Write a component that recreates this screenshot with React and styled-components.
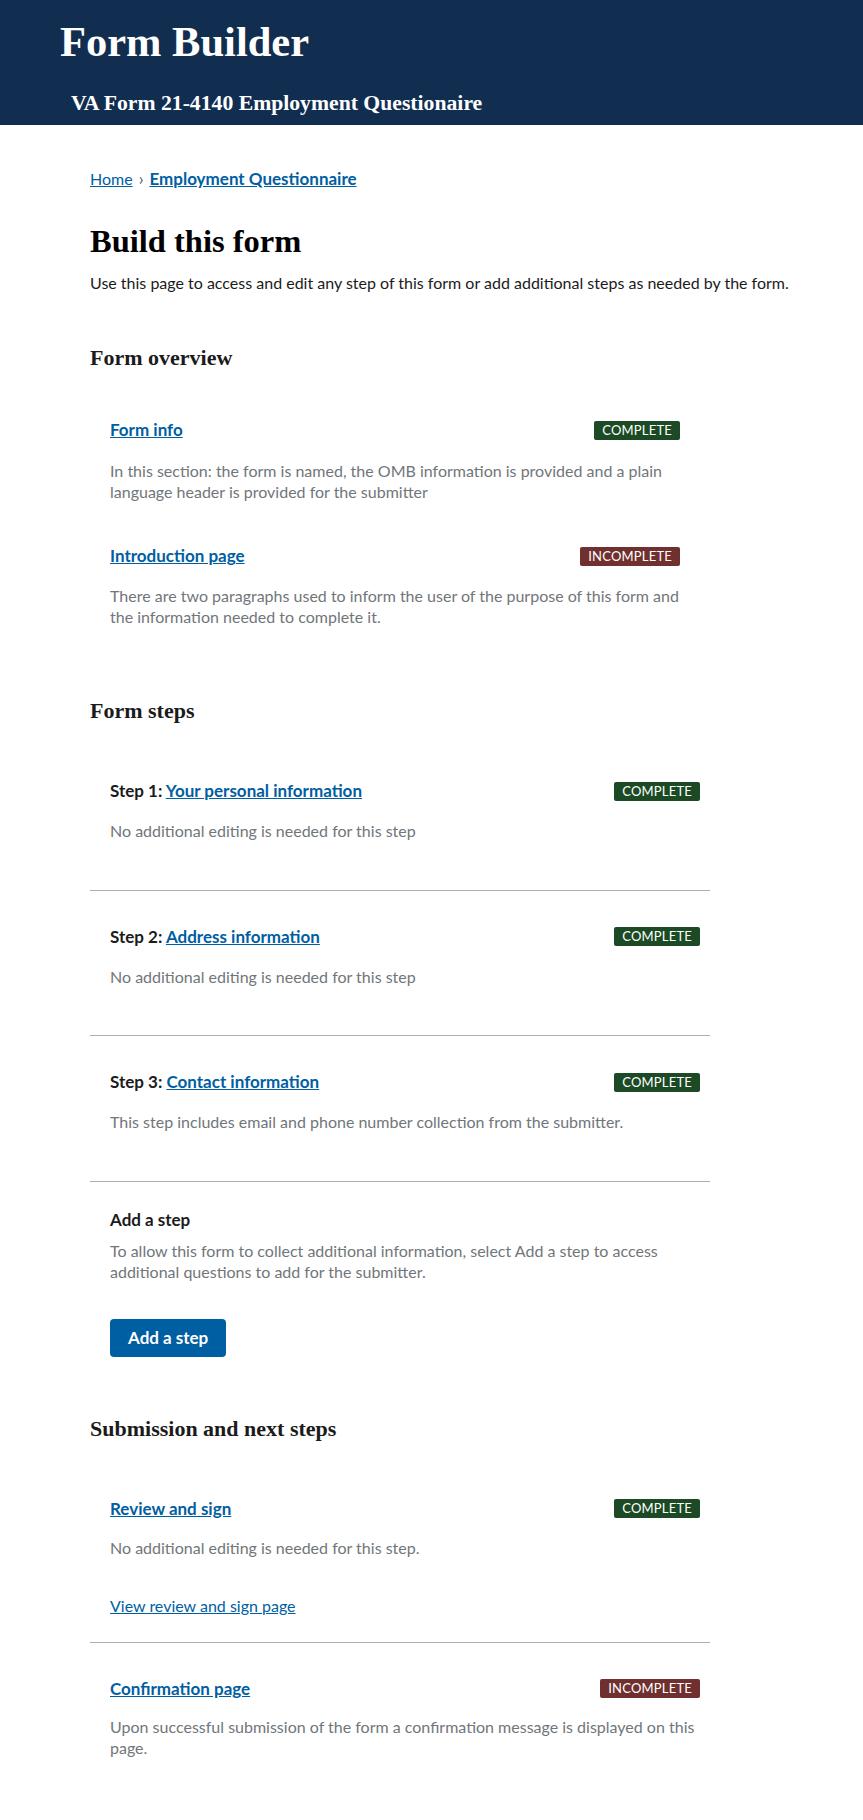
import React from "react";
import styled, { createGlobalStyle } from "styled-components";

const GlobalStyle = createGlobalStyle`
  html, body { margin: 0; padding: 0; background: #ffffff; }
  body { font-family: "Lato", "Liberation Sans", sans-serif; color: #1b1b1b; }
  * { box-sizing: border-box; }
`;

const serif = `"Liberation Serif", "DejaVu Serif", serif`;
const sans = `"Lato", "Liberation Sans", sans-serif`;

const Banner = styled.header`
  background: #112e51;
  height: 125px;
  padding: 17px 0 0 60px;
  display: flex;
  flex-direction: column;
`;

const BannerTitle = styled.div`
  font-family: ${serif};
  font-weight: 700;
  font-size: 42.5px;
  line-height: 50px;
  color: #ffffff;
`;

const BannerSubtitle = styled.div`
  margin: 22px 0 0 11px;
  font-family: ${serif};
  font-weight: 700;
  font-size: 21.7px;
  line-height: 28px;
  color: #ffffff;
`;

const Main = styled.main`
  padding: 42px 0 62px 90px;
  display: flex;
  flex-direction: column;
`;

const Breadcrumb = styled.nav`
  display: flex;
  align-items: center;
  gap: 6px;
  font-family: ${sans};
  font-size: 16px;
  line-height: 24px;
`;

const CrumbLink = styled.a`
  color: #005ea2;
  text-decoration: underline;
  font-weight: ${(p) => (p.$current ? 700 : 400)};
  font-size: ${(p) => (p.$current ? 17 : 16)}px;
`;

const CrumbSep = styled.span`
  color: #565c65;
  font-size: 17px;
`;

const PageTitle = styled.h1`
  margin: 28px 0 0;
  font-family: ${serif};
  font-weight: 700;
  font-size: 32.5px;
  line-height: 44px;
  color: #000000;
`;

const Intro = styled.p`
  margin: 8px 0 0;
  font-family: ${sans};
  font-size: 16px;
  line-height: 24px;
  color: #1b1b1b;
`;

const SectionHeading = styled.h2`
  margin: ${(p) => p.$gap}px 0 0;
  font-family: ${serif};
  font-weight: 700;
  font-size: 22px;
  line-height: 30px;
  color: #1b1b1b;
`;

const List = styled.div`
  margin-top: ${(p) => p.$gap}px;
  width: ${(p) => p.$width}px;
  display: flex;
  flex-direction: column;
`;

const OverviewItem = styled.div`
  padding: 0 20px;
  & + & {
    margin-top: 42px;
  }
`;

const StepItem = styled.div`
  padding: 34px 10px 48.6px 20px;
  border-bottom: 1px solid #a9aeb1;
  &:first-child {
    padding-top: 0;
  }
`;

const ReviewItem = styled.div`
  padding: 0 10px 25px 20px;
  border-bottom: 1px solid #a9aeb1;
`;

const FinalItem = styled.div`
  padding: 34px 10px 0 20px;
`;

const ItemHeader = styled.div`
  display: flex;
  align-items: center;
  justify-content: space-between;
  height: 24px;
`;

const ItemTitle = styled.div`
  font-family: ${sans};
  font-weight: 700;
  font-size: 17px;
  line-height: 24px;
  color: #1b1b1b;
`;

const TitleLink = styled.a`
  color: #005ea2;
  text-decoration: underline;
  font-weight: 700;
`;

const Badge = styled.span`
  display: inline-block;
  height: 19px;
  padding: 0 8px;
  border-radius: 2px;
  font-family: ${sans};
  font-size: 13px;
  line-height: 19px;
  letter-spacing: 0.2px;
  text-transform: uppercase;
  color: #ffffff;
  background: ${(p) => (p.$complete ? "#1b4a25" : "#6f302f")};
`;

const Description = styled.p`
  margin: ${(p) => (p.$gap != null ? p.$gap : 17)}px 0 0;
  font-family: ${sans};
  font-size: 16px;
  line-height: 21px;
  color: #71767a;
`;

const PlainLink = styled.a`
  display: block;
  margin-top: 37px;
  font-family: ${sans};
  font-size: 16px;
  line-height: 22px;
  color: #005ea2;
  text-decoration: underline;
`;

const AddStepBlock = styled.div`
  padding: 26px 20px 0;
  display: flex;
  flex-direction: column;
  align-items: flex-start;
`;

const AddStepLabel = styled.div`
  font-family: ${sans};
  font-weight: 700;
  font-size: 17px;
  line-height: 24px;
  color: #1b1b1b;
`;

const PrimaryButton = styled.button`
  margin-top: 37px;
  height: 38px;
  padding: 0 18px;
  border: none;
  border-radius: 4px;
  background: #005ea2;
  color: #ffffff;
  font-family: ${sans};
  font-weight: 700;
  font-size: 17px;
  cursor: pointer;
`;

const StatusBadge = ({ complete }) => (
  <Badge $complete={complete}>{complete ? "Complete" : "Incomplete"}</Badge>
);

const steps = [
  { n: 1, title: "Your personal information", desc: "No additional editing is needed for this step" },
  { n: 2, title: "Address information", desc: "No additional editing is needed for this step" },
  {
    n: 3,
    title: "Contact information",
    desc: "This step includes email and phone number collection from the submitter.",
  },
];

export default function App() {
  return (
    <>
      <GlobalStyle />
      <Banner>
        <BannerTitle>Form Builder</BannerTitle>
        <BannerSubtitle>VA Form 21-4140 Employment Questionaire</BannerSubtitle>
      </Banner>
      <Main>
        <Breadcrumb>
          <CrumbLink href="#">Home</CrumbLink>
          <CrumbSep>›</CrumbSep>
          <CrumbLink href="#" $current>
            Employment Questionnaire
          </CrumbLink>
        </Breadcrumb>
        <PageTitle>Build this form</PageTitle>
        <Intro>
          Use this page to access and edit any step of this form or add additional steps as needed by the form.
        </Intro>

        <SectionHeading $gap={48}>Form overview</SectionHeading>
        <List $gap={45} $width={610}>
          <OverviewItem>
            <ItemHeader>
              <ItemTitle>
                <TitleLink href="#">Form info</TitleLink>
              </ItemTitle>
              <StatusBadge complete />
            </ItemHeader>
            <Description $gap={18}>
              In this section: the form is named, the OMB information is provided and a plain language header is
              provided for the submitter
            </Description>
          </OverviewItem>
          <OverviewItem>
            <ItemHeader>
              <ItemTitle>
                <TitleLink href="#">Introduction page</TitleLink>
              </ItemTitle>
              <StatusBadge />
            </ItemHeader>
            <Description $gap={17}>
              There are two paragraphs used to inform the user of the purpose of this form and the information needed
              to complete it.
            </Description>
          </OverviewItem>
        </List>

        <SectionHeading $gap={69}>Form steps</SectionHeading>
        <List $gap={53} $width={620}>
          {steps.map((s) => (
            <StepItem key={s.n}>
              <ItemHeader>
                <ItemTitle>
                  Step {s.n}: <TitleLink href="#">{s.title}</TitleLink>
                </ItemTitle>
                <StatusBadge complete />
              </ItemHeader>
              <Description>{s.desc}</Description>
            </StepItem>
          ))}
          <AddStepBlock>
            <AddStepLabel>Add a step</AddStepLabel>
            <Description $gap={8}>
              To allow this form to collect additional information, select Add a step to access additional questions
              to add for the submitter.
            </Description>
            <PrimaryButton type="button">Add a step</PrimaryButton>
          </AddStepBlock>
        </List>

        <SectionHeading $gap={57}>Submission and next steps</SectionHeading>
        <List $gap={53} $width={620}>
          <ReviewItem>
            <ItemHeader>
              <ItemTitle>
                <TitleLink href="#">Review and sign</TitleLink>
              </ItemTitle>
              <StatusBadge complete />
            </ItemHeader>
            <Description $gap={16}>No additional editing is needed for this step.</Description>
            <PlainLink href="#">View review and sign page</PlainLink>
          </ReviewItem>
          <FinalItem>
            <ItemHeader>
              <ItemTitle>
                <TitleLink href="#">Confirmation page</TitleLink>
              </ItemTitle>
              <StatusBadge />
            </ItemHeader>
            <Description $gap={15}>
              Upon successful submission of the form a confirmation message is displayed on this page.
            </Description>
          </FinalItem>
        </List>
      </Main>
    </>
  );
}
